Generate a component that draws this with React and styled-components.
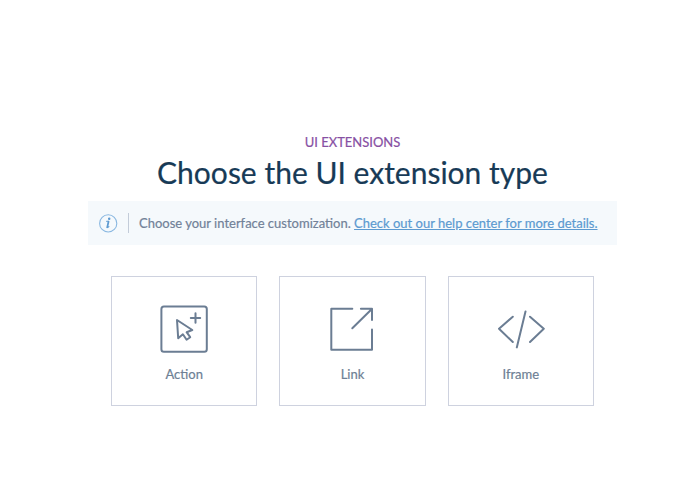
import React from "react";
import styled, { createGlobalStyle } from "styled-components";

const GlobalStyle = createGlobalStyle`
  *, *::before, *::after { box-sizing: border-box; }
  body {
    margin: 0;
    background: #ffffff;
    font-family: Lato, "Liberation Sans", sans-serif;
    -webkit-text-stroke: 0.2px currentColor;
  }
`;

const Page = styled.main`
  display: flex;
  flex-direction: column;
  align-items: center;
  min-height: 494px;
  padding: 132px 0 0 10px;
`;

const Eyebrow = styled.p`
  margin: 0;
  font-size: 13px;
  line-height: 20px;
  color: #8750a3;
`;

const Title = styled.h1`
  margin: 0;
  font-size: 30px;
  line-height: 40px;
  font-weight: 400;
  white-space: nowrap;
  color: #173a56;
`;

const Notice = styled.section`
  display: flex;
  align-items: center;
  width: 529px;
  height: 44px;
  margin-top: 9px;
  padding-left: 10px;
  background: #f5f9fc;
`;

const NoticeDivider = styled.span`
  width: 1px;
  height: 20px;
  margin: 0 10px;
  background: #c3ccd9;
`;

const NoticeText = styled.p`
  margin: 0;
  font-size: 13px;
  line-height: 20px;
  white-space: nowrap;
  color: #718198;
`;

const HelpLink = styled.a`
  color: #5c9ad0;
  text-decoration: underline;
`;

const Cards = styled.div`
  display: grid;
  grid-template-columns: repeat(3, 1fr);
  column-gap: 22px;
  width: 483px;
  margin-top: 31px;
`;

const Card = styled.button`
  display: flex;
  flex-direction: column;
  align-items: center;
  height: 130px;
  padding: 28px 0 0;
  border: 1px solid #ced2df;
  background: #ffffff;
  font: inherit;
  color: #6e7f95;
`;

const CardLabel = styled.span`
  margin-top: 11px;
  font-size: 13px;
  line-height: 20px;
`;

const Icon = styled.svg`
  display: block;
  flex: none;
  fill: none;
  stroke: ${(p) => p.$color || "#6b7d93"};
  stroke-width: ${(p) => p.$weight || 2};
  stroke-linecap: round;
  stroke-linejoin: round;
`;

const InfoIcon = () => (
  <Icon width="20" height="20" viewBox="0 0 20 20" $color="#5f9bd1" $weight={1.1}>
    <circle cx="10.2" cy="10.4" r="8.6" stroke="#8ab8e1" />
    <path d="M8.6 8.3H10.3M9.1 14.6Q10.1 14.6 10.9 13.7" />
    <path d="M10.5 8.6L9.3 14.1" strokeWidth="1.8" />
    <circle cx="11.2" cy="5.7" r="0.7" fill="#5f9bd1" />
  </Icon>
);

const ActionIcon = () => (
  <Icon width="48" height="48" viewBox="0 0 48 48">
    <rect x="1.4" y="1.4" width="45.4" height="45.4" rx="2.5" />
    <path d="M17 15L18.2 33.2L22.9 29.3L26.6 34.7L30.2 32.2L26.6 27.2L32.3 25Z" />
    <path d="M35.5 8.3V17.7M30.8 13H40.2" />
  </Icon>
);

const LinkIcon = () => (
  <Icon width="48" height="48" viewBox="0 0 48 48">
    <path d="M24.3 3.8H3.3V44.7H44V24.5" />
    <path d="M32.9 3.8H44V15M43.6 4.2L24.3 23.3" />
  </Icon>
);

const CodeIcon = () => (
  <Icon width="48" height="48" viewBox="0 0 48 48">
    <path d="M15.8 11.7L2 23.7L15.8 37M33 11.7L46.8 23.7L33 37M28.5 6.4L19.8 42.4" />
  </Icon>
);

const extensionTypes = [
  { label: "Action", Glyph: ActionIcon },
  { label: "Link", Glyph: LinkIcon },
  { label: "Iframe", Glyph: CodeIcon },
];

export default function App() {
  return (
    <>
      <GlobalStyle />
      <Page>
        <Eyebrow>UI EXTENSIONS</Eyebrow>
        <Title>Choose the UI extension type</Title>
        <Notice>
          <InfoIcon />
          <NoticeDivider />
          <NoticeText>
            Choose your interface customization.{" "}
            <HelpLink href="#">Check out our help center for more details.</HelpLink>
          </NoticeText>
        </Notice>
        <Cards>
          {extensionTypes.map(({ label, Glyph }) => (
            <Card key={label} type="button">
              <Glyph />
              <CardLabel>{label}</CardLabel>
            </Card>
          ))}
        </Cards>
      </Page>
    </>
  );
}
